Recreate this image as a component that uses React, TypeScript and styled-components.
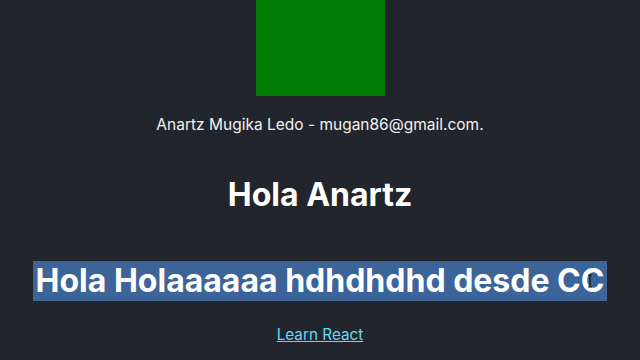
import { FC } from 'react';
import styled, { createGlobalStyle } from 'styled-components';

const GlobalStyle = createGlobalStyle`
  html, body {
    margin: 0;
    padding: 0;
    background: #23252c;
  }
`;

const Header = styled.div`
  height: 360px;
  overflow: hidden;
  display: flex;
  flex-direction: column;
  align-items: center;
  background: #23252c;
  color: #ffffff;
  font-family: Inter, "Liberation Sans", sans-serif;
`;

const Logo = styled.div`
  width: 129px;
  height: 96px;
  background: #037b03;
`;

const Author = styled.p`
  margin: 19px 0 0 0;
  font-size: 15.5px;
  line-height: 20px;
  color: #f2f2f2;
`;

const Title = styled.h1`
  margin: 40px 0 0 0;
  font-size: 32px;
  line-height: 40px;
  font-weight: 700;
`;

const SelectedTitle = styled.h1`
  margin: 46px 0 0 0;
  font-size: 32px;
  line-height: 40px;
  font-weight: 700;
  position: relative;
`;

const Highlight = styled.span`
  display: inline-block;
  background: #3c6498;
  padding: 0 3px;
`;

const Cursor = styled.svg`
  position: absolute;
  right: 14px;
  top: 13px;
`;

const AppLink = styled.a`
  margin-top: 24px;
  font-size: 15.3px;
  line-height: 20px;
  color: #61dafb;
  text-decoration: underline;
`;

const App: FC = () => {
    return (
        <>
            <GlobalStyle />
            <Header>
                <Logo />
                <Author>Anartz Mugika Ledo - mugan86@gmail.com.</Author>
                <Title>Hola Anartz</Title>
                <SelectedTitle>
                    <Highlight>Hola Holaaaaaa hdhdhdhd desde CC</Highlight>
                    <Cursor width="6" height="14" viewBox="0 0 6 14">
                        <path d="M1 1h4M3 1v12M1 13h4" stroke="#111" strokeWidth="1.2" fill="none" />
                    </Cursor>
                </SelectedTitle>
                <AppLink href="#">Learn React</AppLink>
            </Header>
        </>
    );
};

export default App;
